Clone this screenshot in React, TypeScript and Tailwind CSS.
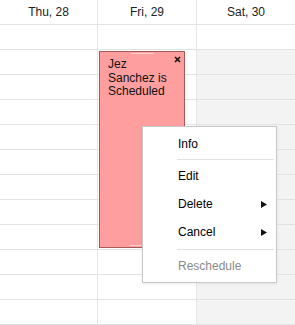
const days = ["Thu, 28", "Fri, 29", "Sat, 30"];
const rows = Array.from({ length: 12 }, (_, i) => i);

const Arrow = () => (
  <svg width="6" height="7" viewBox="0 0 6 7" className="ml-auto">
    <path d="M0 0 L6 3.5 L0 7 Z" fill="#111" />
  </svg>
);

const MenuItem = ({ label, sub, disabled }: { label: string; sub?: boolean; disabled?: boolean }) => (
  <div
    className={`flex h-[28px] items-center pl-[35px] pr-[9px] ${disabled ? "text-[#8a8a8a]" : "text-black"}`}
  >
    <span>{label}</span>
    {sub && <Arrow />}
  </div>
);

const Separator = ({ top }: { top: string }) => (
  <div className={`${top} mb-[2px] ml-[34px] mr-[2px] h-px bg-[#e2e2e2]`} />
);

export default function App() {
  return (
    <div className="relative h-[325px] w-[295px] overflow-hidden bg-white font-['Liberation_Sans',Arial,sans-serif] text-[12px]">
      <div className="flex">
        {days.map((d, i) => (
          <div
            key={d}
            className={`flex flex-col ${i === 0 ? "w-[98px] border-r" : i === 1 ? "w-[99px] border-r" : "flex-1"} border-[#e6e6e6]`}
          >
            <div className="h-[25px] border-b border-[#e3e3e3] text-center leading-[24px] text-[#222]">{d}</div>
            {rows.map((r) => (
              <div
                key={r}
                className={`h-[25px] border-b border-[#e3e3e3] ${i === 2 && r > 0 ? "bg-[#f3f3f3]" : "bg-white"}`}
              />
            ))}
          </div>
        ))}
      </div>

      <div className="absolute left-[99px] top-[51px] h-[197px] w-[86px] border border-[#a65a5a] bg-[#ff9e9e]">
        <div className="mx-auto mt-px h-px w-[23px] bg-[#ffd0d0]" />
        <svg width="7" height="7" viewBox="0 0 7 7" className="absolute right-[3px] top-[4px]">
          <path d="M1 1 L6 6 M6 1 L1 6" stroke="#111" strokeWidth="1.6" />
        </svg>
        <div className="ml-[8px] mt-[4px] w-[62px] leading-[13.7px] text-[#111]">Jez Sanchez is Scheduled</div>
        <div className="absolute bottom-[1px] left-[30px] h-px w-[23px] bg-[#ffd0d0]" />
      </div>

      <div className="absolute left-[142px] top-[126px] w-[135px] border border-[#c8c8c8] bg-white pb-[2px] pt-[3px] shadow-[0_1px_3px_rgba(0,0,0,0.08)]">
        <MenuItem label="Info" />
        <Separator top="mt-[1px]" />
        <MenuItem label="Edit" />
        <MenuItem label="Delete" sub />
        <MenuItem label="Cancel" sub />
        <Separator top="mt-[3px]" />
        <MenuItem label="Reschedule" disabled />
      </div>
    </div>
  );
}
